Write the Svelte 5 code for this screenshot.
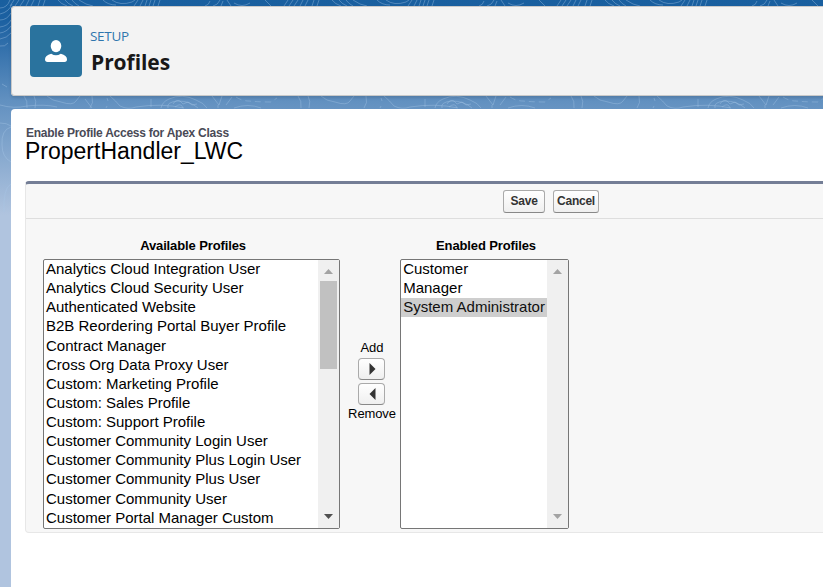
<script>
  const available = [
    'Analytics Cloud Integration User', 'Analytics Cloud Security User', 'Authenticated Website',
    'B2B Reordering Portal Buyer Profile', 'Contract Manager', 'Cross Org Data Proxy User',
    'Custom: Marketing Profile', 'Custom: Sales Profile', 'Custom: Support Profile',
    'Customer Community Login User', 'Customer Community Plus Login User',
    'Customer Community Plus User', 'Customer Community User', 'Customer Portal Manager Custom'
  ];
  const enabled = ['Customer', 'Manager', 'System Administrator'];
  const selected = 'System Administrator';
  const tiles = [0, 274, 547];
</script>

{#snippet list(items, kind)}
  <div class="list {kind}">
    <div class="options">
      {#each items as item}
        <div class="option" class:selected={item === selected}><span>{item}</span></div>
      {/each}
    </div>
    <div class="scrollbar">
      <svg class="arrow" width="9" height="5" viewBox="0 0 9 5"><path d="M0 5 4.500 0 9 5Z" fill="#a3a3a3" /></svg>
      {#if kind === 'available'}<div class="thumb"></div>{/if}
      <svg class="arrow down" width="9" height="5" viewBox="0 0 9 5"><path d="M0 0h9L4.500 5Z" fill={kind === 'available' ? '#505050' : '#a3a3a3'} /></svg>
    </div>
  </div>
{/snippet}

<div class="page">
  <svg class="contours" width="823" height="230" viewBox="0 0 823 230" fill="none" stroke="#a9c8e8" stroke-opacity=".38">
    {#each tiles as x}
      <g transform="translate({x} 0)">
        <path d="M14 0 10 6M19 0l-4 6M24 0l-4 6M29 0l-3 6M34 0l-3 6M40 0l-2 6M45 0l-2 6M58 0q3 4 9 6M65 0q3 4 8 6M72 0q3 4 7 6M79 0q7 5 14 6M103 0q5 5 13 5M112 0q8 6 20 2l3-2M138 0l-4 6M143 0l-3 6M147 0l-2 6M151 0l-2 6M155 0l-2 6M160 0l-2 6M205 6q4-1 5-5M213 6q5-1 7-6M221 6l2-5M227 0l4 6M234 3q8 5 16 0M265 0l6 6" />
        <path d="M161 108q1-6 8-9 13-6 27 1 8 3 11 8M168 108q-2-6 10-7 12 0 20 7M173 104q3-5 7-3l3 3 5-2 4 3 5-1M175 107q6-5 8 1M212 96l7 9 3-9M218 108v-3M226 105l6-8M234 108q14-5 27 0M107 98l1 3M107 106l-1 2M151 99v8M24 96q4 5 3 12M34 96q3 5 1 12M47 96q5 5 14 6 12 4 15-1l4-5M92 96q2 7-2 12M110 96q6 5 10 10 8 4 16 1 25-4 48 1" />
        <path stroke-dasharray="6 4" d="M236 97q6 4 13 4 10 1 22 1l6-4" />
      </g>
    {/each}
    <path d="M0 8q7 0 10-8M0 14q9-2 12-10M0 20q7 0 11-7M0 27q8-1 11-7M0 33q7-1 11-7M0 39q7-1 11-6M0 46q5 1 8-3M2 84l5 3M0 105q14 4 27 1 18-2 30 1M85 99l7 9M0 123q7 0 11 3M11 127q-10 3-9 18 0 12 9 17M11 184q-8 4-7 28" />
  </svg>

  <header>
    <div class="tile">
      <svg width="22" height="22" viewBox="0 0 22 22" fill="#fff"><ellipse cx="11" cy="6.100" rx="5.300" ry="6.100" /><path d="M6.200 13.800Q11 16.900 15.800 13.800q6.200 1.600 6.200 5.500 0 2.700-2.500 2.700h-17Q0 22 0 19.300q0-3.900 6.200-5.500Z" /></svg>
    </div>
    <div class="heading">
      <div class="setup"><span>SETUP</span></div>
      <h1><span>Profiles</span></h1>
    </div>
  </header>

  <main>
    <div class="subtitle"><span>Enable Profile Access for Apex Class</span></div>
    <h2><span>PropertHandler_LWC</span></h2>
    <section>
      <div class="actions"><button class="save">Save</button><button class="cancel">Cancel</button></div>
      <div class="picker">
        <div class="column"><h3><span>Available Profiles</span></h3>{@render list(available, 'available')}</div>
        <div class="transfer">
          <span class="add">Add</span>
          <button aria-label="Add"><svg width="7" height="12" viewBox="0 0 7 12"><path d="M.5 0 6.500 6 .5 12Z" fill="#333" /></svg></button>
          <button aria-label="Remove"><svg width="7" height="12" viewBox="0 0 7 12"><path d="M6.500 0 .5 6l6 6Z" fill="#333" /></svg></button>
          <span class="remove">Remove</span>
        </div>
        <div class="column"><h3><span>Enabled Profiles</span></h3>{@render list(enabled, 'enabled')}</div>
      </div>
    </section>
  </main>
</div>

<style>
  :global(body) { margin: 0; overflow: hidden; }
  * { box-sizing: border-box; }
  h1, h2, h3 { margin: 0; }
  .page { position: relative; width: 823px; height: 587px; overflow: hidden; padding: 6px 0 0 11px; font-family: "Liberation Sans", Arial, sans-serif; color: #000; background: linear-gradient(#195f9f 0, #1b60a1 20px, #6190c0 100px, #b0c4df 215px); }
  .contours { position: absolute; left: 0; top: 0; }
  header { position: relative; display: flex; width: 840px; height: 90px; padding: 19px; border-radius: 4px; background: #f3f3f3; box-shadow: inset 0 0 0 1px #c9c9c9, 0 2px 3px rgba(0,0,0,.12); }
  .tile { display: flex; align-items: center; justify-content: center; width: 52px; height: 52px; border-radius: 4px; background: #2a739e; }
  .heading { padding-left: 8px; font-family: "Open Sans", "Noto Sans", sans-serif; }
  .setup { height: 23px; font-size: 13.500px; line-height: 22px; color: #2f76ad; letter-spacing: -.3px; }
  h1 { padding-left: 1px; font-size: 21px; line-height: 28px; letter-spacing: -.05px; color: #181818; }
  main { position: relative; height: 490px; margin-top: 13px; padding: 16px 0 0 14px; border-radius: 4px 0 0 0; background: #fff; }
  .subtitle { height: 14px; padding-left: 1px; font-size: 12px; font-weight: bold; line-height: 16px; letter-spacing: -.25px; color: #4a4a56; }
  h2 { height: 42px; font-size: 23px; font-weight: normal; line-height: 25px; }
  section { width: 820px; height: 352px; border: 1px solid #e7e7e7; border-top: 3px solid #747e96; border-radius: 4px; background: #f7f7f7; }
  .actions { display: flex; gap: 8px; height: 35px; padding: 6px 0 0 477px; border-bottom: 1px solid #dedede; }
  button { padding: 0; border: 1px solid #aaa; border-bottom-color: #888; border-radius: 3px; background: linear-gradient(#fff, #efefef); font: bold 12px "Liberation Sans", Arial, sans-serif; color: #333; }
  .actions button { height: 23px; padding-bottom: 2px; }
  .save { width: 42px; letter-spacing: -.2px; }
  .cancel { width: 46px; letter-spacing: -.25px; }
  .picker { display: flex; padding: 20px 0 0 17px; }
  h3 { height: 20px; padding-left: 3px; text-align: center; font-size: 13px; line-height: 14px; letter-spacing: -.12px; }
  .list { display: flex; height: 270px; border: 1px solid #767676; border-radius: 2px; background: #fff; }
  .available { width: 297px; }
  .enabled { width: 169px; }
  .options { flex: 1; font-size: 15px; white-space: nowrap; }
  .option { height: 19.130px; padding-left: 2px; line-height: 17px; }
  .enabled .option { padding-left: 2.200px; }
  .selected { background: #cecece; color: #101010; }
  .scrollbar { display: flex; flex-direction: column; align-items: center; width: 21px; padding: 9px 0 9px; background: #f0f0f0; }
  .arrow { display: block; flex: none; }
  .down { margin-top: auto; }
  .thumb { width: 17px; height: 88px; margin-top: 7px; background: #c1c1c1; }
  .transfer { display: flex; flex-direction: column; align-items: center; width: 60px; padding: 101px 0 0 3px; font-size: 13px; }
  .add { height: 18px; padding-left: 1px; line-height: 16px; }
  .remove { padding-left: 1px; line-height: 12px; letter-spacing: -.1px; }
  .transfer button { display: flex; align-items: center; justify-content: center; width: 27px; height: 22px; margin-bottom: 3px; border-radius: 4px; }
  .transfer svg { margin-left: 1px; }
</style>
